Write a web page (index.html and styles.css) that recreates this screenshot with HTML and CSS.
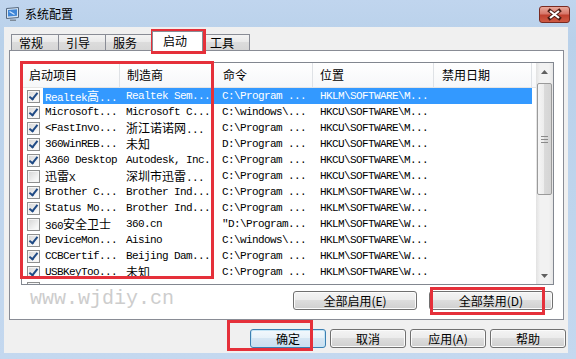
FILE: index.html
```html
<!DOCTYPE html>
<html lang="zh-CN">
<head>
  <meta charset="UTF-8">
  <title>系统配置</title>
  <link rel="stylesheet" href="styles.css">
</head>
<body>
  <div class="window">
    <div class="titlebar">
      <svg class="app-icon" viewBox="0 0 16 16" width="16" height="16">
        <path d="M1.5 2.5l12-1v10l-12 1z" fill="#d7e6f5" stroke="#55677d"/>
        <path d="M3 4l9-.8v6.6l-9 .8z" fill="#3f86d6"/>
        <path d="M4.5 5.5l5 3" stroke="#cfe6ff" stroke-width="1.2"/>
        <path d="M5 13.5h6v1.5H5z" fill="#7e8a98"/>
      </svg>
      <span class="title">系统配置</span>
      <div class="close">
        <svg width="29" height="15" viewBox="0 0 29 15">
          <path d="M10 4l9 7M19 4l-9 7" stroke="#4a1a12" stroke-width="4" stroke-linecap="square"/>
          <path d="M10 4l9 7M19 4l-9 7" stroke="#fff" stroke-width="2.2"/>
        </svg>
      </div>
    </div>

    <div class="client">
      <div class="tabs">
        <div class="tab">常规</div>
        <div class="tab">引导</div>
        <div class="tab">服务</div>
        <div class="tab active">启动</div>
        <div class="tab last">工具</div>
      </div>

      <div class="panel">
        <div class="listview">
          <div class="lv-body">
            <div class="lv-head">
              <div class="hc">启动项目</div>
              <div class="hc">制造商</div>
              <div class="hc h3">命令</div>
              <div class="hc">位置</div>
              <div class="hc h5">禁用日期</div>
              <div class="hc filler"></div>
            </div>

            <div class="row selected">
              <div class="chk"><span class="cb on"></span></div>
              <div class="cell c1">Realtek<span class="z">高</span>...</div>
              <div class="cell c2">Realtek Sem...</div>
              <div class="cell c3">C:\Program ...</div>
              <div class="cell c4">HKLM\SOFTWARE\M...</div>
              <div class="cell c5"></div>
            </div>
            <div class="row">
              <div class="chk"><span class="cb on"></span></div>
              <div class="cell c1">Microsoft...</div>
              <div class="cell c2">Microsoft C...</div>
              <div class="cell c3">C:\windows\...</div>
              <div class="cell c4">HKCU\SOFTWARE\M...</div>
              <div class="cell c5"></div>
            </div>
            <div class="row">
              <div class="chk"><span class="cb on"></span></div>
              <div class="cell c1">&lt;FastInvo...</div>
              <div class="cell c2"><span class="z">浙江诺诺网</span>...</div>
              <div class="cell c3">C:\Program ...</div>
              <div class="cell c4">HKCU\SOFTWARE\M...</div>
              <div class="cell c5"></div>
            </div>
            <div class="row">
              <div class="chk"><span class="cb on"></span></div>
              <div class="cell c1">360WinREB...</div>
              <div class="cell c2"><span class="z">未知</span></div>
              <div class="cell c3">D:\Program ...</div>
              <div class="cell c4">HKCU\SOFTWARE\M...</div>
              <div class="cell c5"></div>
            </div>
            <div class="row">
              <div class="chk"><span class="cb on"></span></div>
              <div class="cell c1">A360 Desktop</div>
              <div class="cell c2">Autodesk, Inc.</div>
              <div class="cell c3">C:\Program ...</div>
              <div class="cell c4">HKCU\SOFTWARE\M...</div>
              <div class="cell c5"></div>
            </div>
            <div class="row">
              <div class="chk"><span class="cb"></span></div>
              <div class="cell c1"><span class="z">迅雷</span>X</div>
              <div class="cell c2"><span class="z">深圳市迅雷</span>...</div>
              <div class="cell c3">C:\Program ...</div>
              <div class="cell c4">HKCU\SOFTWARE\M...</div>
              <div class="cell c5"></div>
            </div>
            <div class="row">
              <div class="chk"><span class="cb on"></span></div>
              <div class="cell c1">Brother C...</div>
              <div class="cell c2">Brother Ind...</div>
              <div class="cell c3">C:\Program ...</div>
              <div class="cell c4">HKLM\SOFTWARE\W...</div>
              <div class="cell c5"></div>
            </div>
            <div class="row">
              <div class="chk"><span class="cb on"></span></div>
              <div class="cell c1">Status Mo...</div>
              <div class="cell c2">Brother Ind...</div>
              <div class="cell c3">C:\Program ...</div>
              <div class="cell c4">HKLM\SOFTWARE\W...</div>
              <div class="cell c5"></div>
            </div>
            <div class="row">
              <div class="chk"><span class="cb"></span></div>
              <div class="cell c1">360<span class="z">安全卫士</span></div>
              <div class="cell c2">360.cn</div>
              <div class="cell c3">"D:\Program...</div>
              <div class="cell c4">HKLM\SOFTWARE\W...</div>
              <div class="cell c5"></div>
            </div>
            <div class="row">
              <div class="chk"><span class="cb on"></span></div>
              <div class="cell c1">DeviceMon...</div>
              <div class="cell c2">Aisino</div>
              <div class="cell c3">C:\windows\...</div>
              <div class="cell c4">HKLM\SOFTWARE\W...</div>
              <div class="cell c5"></div>
            </div>
            <div class="row">
              <div class="chk"><span class="cb on"></span></div>
              <div class="cell c1">CCBCertif...</div>
              <div class="cell c2">Beijing Dam...</div>
              <div class="cell c3">C:\Program ...</div>
              <div class="cell c4">HKLM\SOFTWARE\W...</div>
              <div class="cell c5"></div>
            </div>
            <div class="row">
              <div class="chk"><span class="cb on"></span></div>
              <div class="cell c1">USBKeyToo...</div>
              <div class="cell c2"><span class="z">未知</span></div>
              <div class="cell c3">C:\Program ...</div>
              <div class="cell c4">HKLM\SOFTWARE\W...</div>
              <div class="cell c5"></div>
            </div>
            <div class="row">
              <div class="chk"><span class="cb on"></span></div>
            </div>
          </div>

          <div class="vscroll">
            <div class="sb-btn">
              <svg width="7" height="4" viewBox="0 0 7 4"><path d="M0 4L3.5 0 7 4z" fill="#606060"/></svg>
            </div>
            <div class="sb-thumb">
              <svg width="7" height="7" viewBox="0 0 7 7"><path d="M0 .5h7M0 3.5h7M0 6.5h7" stroke="#8a8a8a"/></svg>
            </div>
            <div class="sb-track"></div>
            <div class="sb-btn">
              <svg width="7" height="4" viewBox="0 0 7 4"><path d="M0 0L3.5 4 7 0z" fill="#606060"/></svg>
            </div>
          </div>
        </div>

        <div class="panel-actions">
          <button class="btn wide">全部启用(E)</button>
          <button class="btn wide">全部禁用(D)</button>
        </div>

        <div class="watermark">www.wjdiy.cn</div>
      </div>

      <div class="dialog-actions">
        <button class="btn default">确定</button>
        <button class="btn">取消</button>
        <button class="btn">应用(A)</button>
        <button class="btn">帮助</button>
      </div>
    </div>

    <div class="mark mark-tab"></div>
    <div class="mark mark-list"></div>
    <div class="mark mark-disable"></div>
    <div class="mark mark-ok"></div>
  </div>
</body>
</html>
```

FILE: styles.css
```css
body {
  margin: 0;
  font-family: "Noto Sans CJK SC", "Liberation Sans", sans-serif;
  font-size: 12px;
  color: #000;
}

.window {
  position: relative;
  width: 576px;
  height: 359px;
  box-sizing: border-box;
  background: linear-gradient(#c0d5ee, #b9d1ea 40px, #c4d8ef);
  display: flex;
  flex-direction: column;
  overflow: hidden;
}

.titlebar {
  height: 27px;
  display: flex;
  align-items: center;
  padding-left: 5px;
}

.app-icon {
  margin-right: 4px;
}

.title {
  font-size: 12px;
}

.close {
  margin-left: auto;
  margin-right: 6px;
  align-self: flex-start;
  margin-top: 6px;
  width: 31px;
  height: 17px;
  box-sizing: border-box;
  border: 1px solid #7a2b22;
  border-radius: 3px;
  background: linear-gradient(#e9a99b, #d7776a 45%, #c0412f 55%, #cf5a44);
  display: flex;
  align-items: center;
  justify-content: center;
}

.client {
  flex: 1;
  margin: 0 8px 6px 4px;
  background: #f0f0f0;
  display: flex;
  flex-direction: column;
}

/* tabs */
.tabs {
  display: flex;
  align-items: flex-end;
  height: 19px;
  padding: 4px 0 0 7px;
}

.tab {
  width: 47px;
  height: 16px;
  box-sizing: border-box;
  border: 1px solid #898c95;
  border-right: 0;
  border-bottom: 0;
  background: linear-gradient(#f4f4f4, #e8e8e8 50%, #dcdcdc 50%, #d6d6d6);
  padding-left: 7px;
  line-height: 15px;
}
.tab.last {
  border-right: 1px solid #898c95;
}
.tab.active {
  width: 51px;
  height: 20px;
  margin-bottom: -1px;
  border-right: 1px solid #898c95;
  background: #fff;
  padding-left: 10px;
  line-height: 17px;
  position: relative;
  z-index: 1;
}
.tab.active + .tab {
  border-left: 0;
}

.panel {
  position: relative;
  margin-left: 5px;
  width: 555px;
  height: 270px;
  box-sizing: border-box;
  border: 1px solid #898c95;
  background: #fff;
  padding: 11px 0 0 11px;
}

/* list view */
.listview {
  width: 533px;
  height: 223px;
  box-sizing: border-box;
  border: 1px solid #828790;
  display: flex;
  background: #fff;
}

.lv-body {
  flex: 1;
  overflow: hidden;
}

.lv-head {
  display: grid;
  grid-template-columns: 98px 93px 100px 121px 98px 1fr;
  height: 25px;
  box-sizing: border-box;
  border-bottom: 1px solid #e5e5e5;
  background: linear-gradient(#ffffff, #f6f7f9);
}

.hc {
  padding-left: 7px;
  line-height: 24px;
  border-right: 1px solid #dfe2e6;
  font-size: 12px;
  color: #000;
}
.hc.h3 { padding-left: 10px; }
.hc.h5 { padding-left: 8px; }
.hc.filler { border-right: 0; }

.row {
  display: grid;
  grid-template-columns: 21px 77px 93px 100px 121px 98px;
  height: 16px;
}

.chk {
  display: flex;
  align-items: center;
  padding-left: 5px;
}

.cb {
  position: relative;
  width: 13px;
  height: 13px;
  box-sizing: border-box;
  border: 1px solid #8e8f8f;
  background: linear-gradient(135deg, #d4d4d4, #f4f4f4 70%, #fff);
  box-shadow: inset 0 0 0 1px #f6f6f6;
}
.cb.on::after {
  content: "";
  position: absolute;
  left: 3px;
  top: 0;
  width: 3px;
  height: 7px;
  border: solid #1f4a85;
  border-width: 0 2px 2px 0;
  transform: rotate(38deg);
}

.cell {
  white-space: nowrap;
  overflow: hidden;
  line-height: 16px;
  font-family: "Liberation Mono", "Noto Sans CJK SC", monospace;
  font-size: 11px;
  letter-spacing: -0.6px;
  color: #000;
}
.cell.c1 { padding-left: 2px; }
.cell.c2 { padding-left: 6px; }
.cell.c3 { padding-left: 9px; }
.cell.c4 { padding-left: 7px; }

.z {
  font-family: "Noto Sans CJK SC", sans-serif;
  font-size: 12px;
  letter-spacing: 0;
}

.row.selected .cell {
  background: #3399ff;
  color: #fff;
}

/* scrollbar */
.vscroll {
  width: 17px;
  display: flex;
  flex-direction: column;
  background: linear-gradient(90deg, #e2e2e2, #f2f2f2 25%, #f2f2f2 75%, #e6e6e6);
}
.sb-btn {
  height: 17px;
  display: flex;
  align-items: center;
  justify-content: center;
}
.sb-thumb {
  margin: 3px 1px 0;
  height: 112px;
  box-sizing: border-box;
  border: 1px solid #9a9a9a;
  border-radius: 2px;
  background: linear-gradient(90deg, #f5f5f5, #ececec 50%, #dadada 50%, #d4d4d4);
  display: flex;
  align-items: center;
  justify-content: center;
}
.sb-track {
  flex: 1;
}

/* buttons */
.btn {
  height: 19px;
  padding: 0;
  box-sizing: border-box;
  border: 1px solid #707070;
  border-radius: 3px;
  background: linear-gradient(#f4f4f4, #ebebeb 50%, #dddddd 50%, #cfcfcf);
  box-shadow: inset 0 0 0 1px #fbfbfb;
  font-family: "Noto Sans CJK SC", sans-serif;
  font-size: 12px;
  line-height: 16px;
  color: #000;
  width: 76px;
}
.btn.wide {
  width: 124px;
}
.btn.default {
  border-color: #3c7fb1;
  box-shadow: inset 0 0 0 1px #c4e5f6;
  background: linear-gradient(#f2f8fc, #e6f1f9 50%, #d5e6f3 50%, #cadff0);
}

.panel-actions {
  display: flex;
  justify-content: flex-end;
  gap: 12px;
  margin-top: 6px;
  padding-right: 10px;
}

.dialog-actions {
  display: flex;
  gap: 4px;
  margin-top: 9px;
  padding-left: 246px;
}

.watermark {
  position: absolute;
  left: 20px;
  top: 238px;
  font-family: "Liberation Mono", monospace;
  font-size: 20px;
  line-height: 20px;
  color: #cdcdcd;
}

/* red annotation frames */
.mark {
  position: absolute;
  border: 3px solid #e5303a;
  box-sizing: border-box;
}
.mark-tab { left: 151px; top: 29px; width: 55px; height: 25px; }
.mark-list { left: 20px; top: 61px; width: 194px; height: 218px; }
.mark-disable { left: 430px; top: 287px; width: 115px; height: 28px; }
.mark-ok { left: 227px; top: 320px; width: 86px; height: 31px; }
```
